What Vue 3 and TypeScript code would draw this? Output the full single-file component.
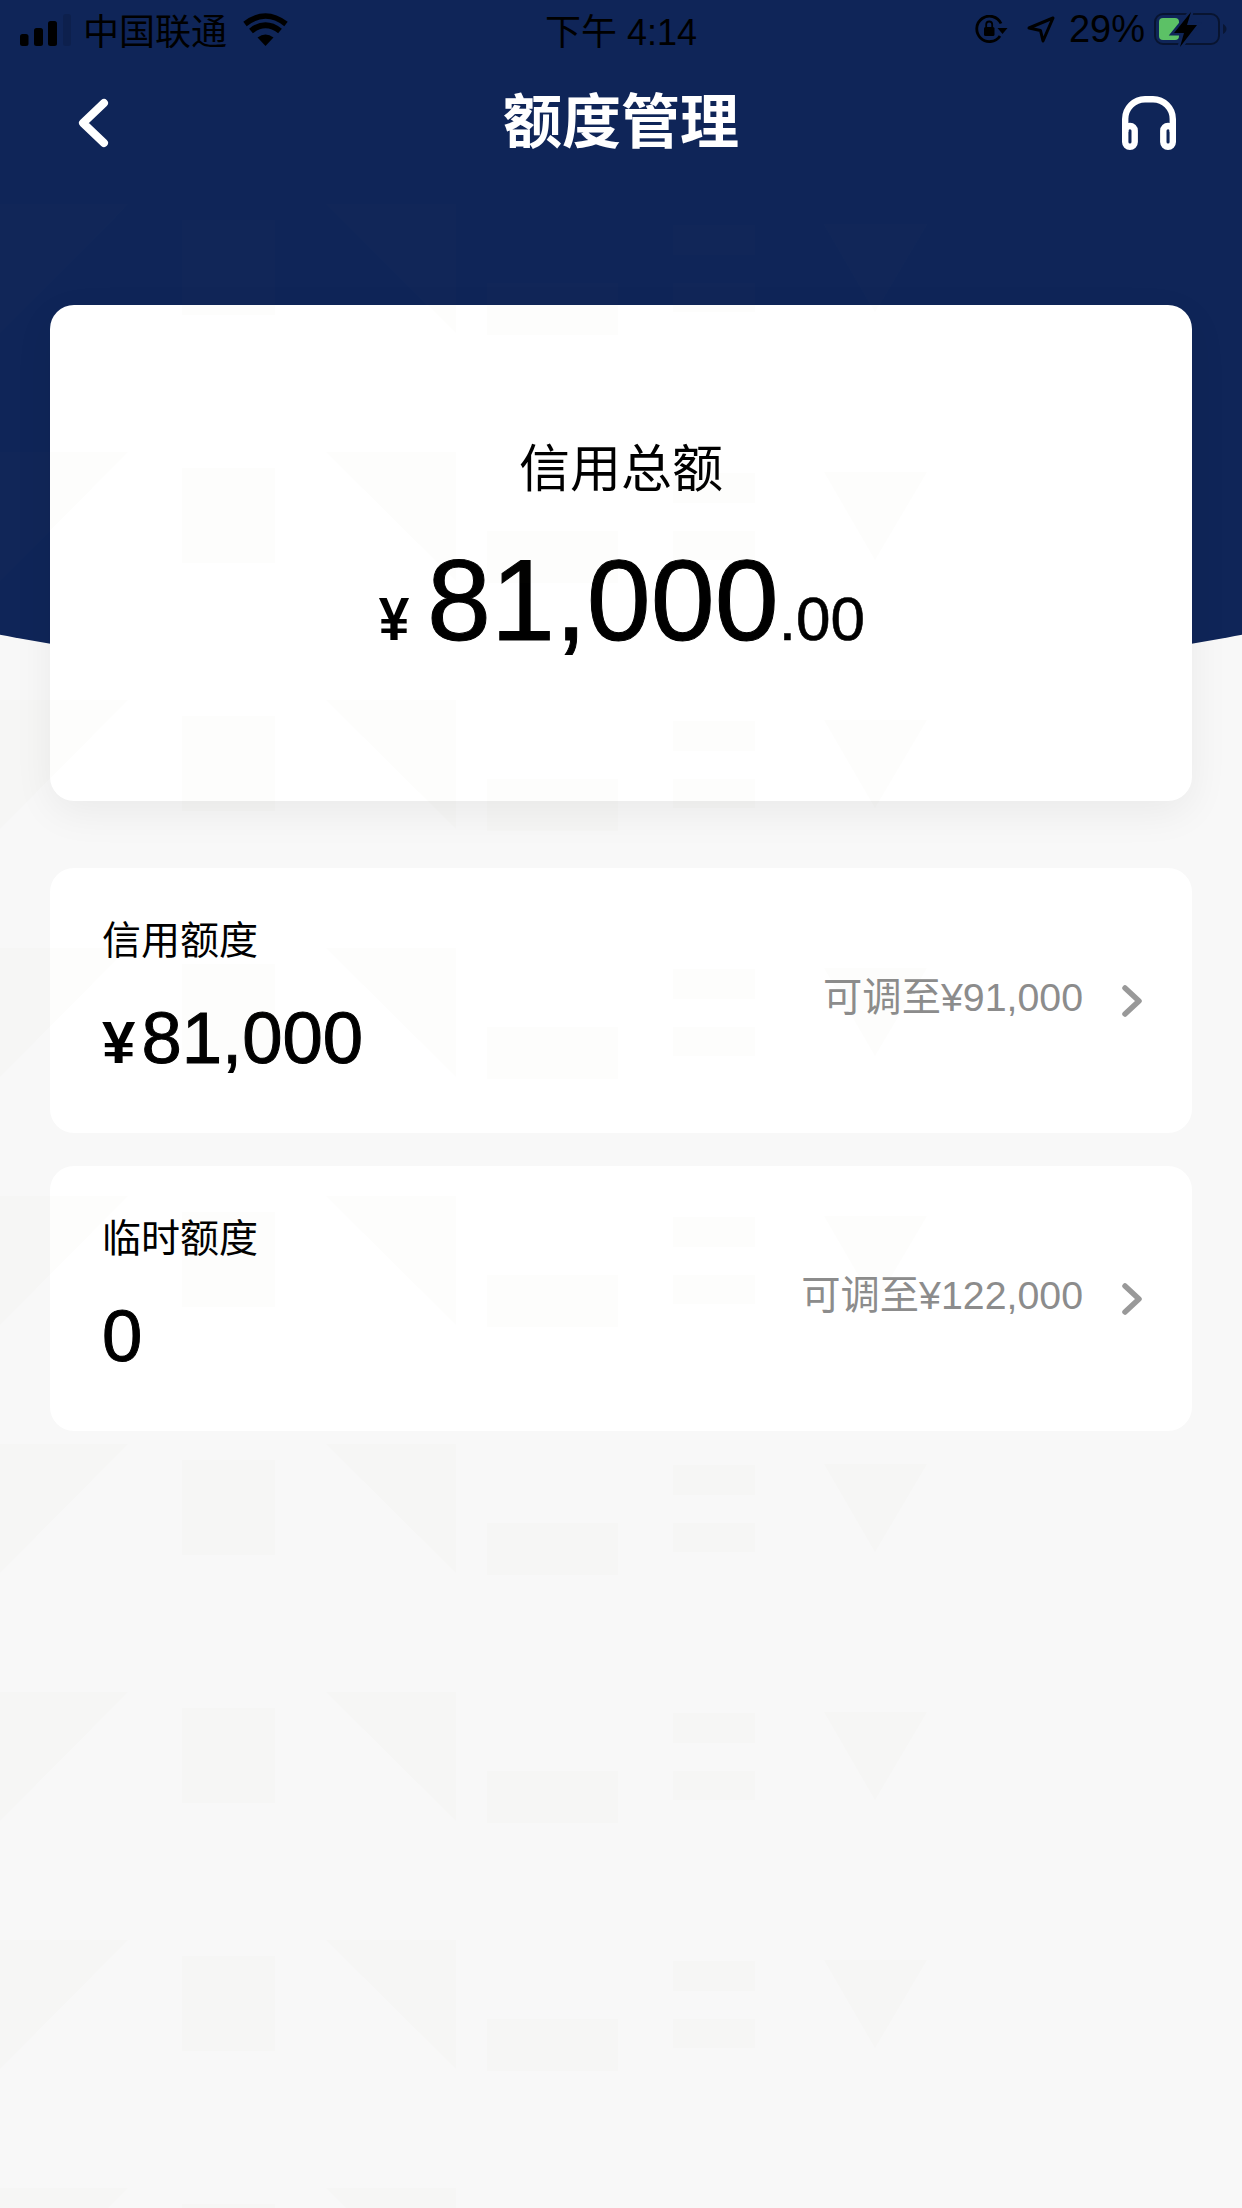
<script setup lang="ts">
interface QuotaRow {
  id: number;
  label: string;
  amount: string;
  hasCurrency: boolean;
  limit: string;
}

const rows: QuotaRow[] = [
  { id: 1, label: '信用额度', amount: '81,000', hasCurrency: true, limit: '可调至¥91,000' },
  { id: 2, label: '临时额度', amount: '0', hasCurrency: false, limit: '可调至¥122,000' },
];
</script>

<template>
  <div class="page">
    <div class="hero">
      <div class="status">
        <div class="status-left">
          <svg class="signal" width="51" height="32" viewBox="0 0 51 32">
            <rect x="0" y="20" width="8.5" height="12" rx="2.5" />
            <rect x="14" y="14" width="9" height="18" rx="2.5" />
            <rect x="28" y="7" width="9" height="25" rx="2.5" />
            <rect x="43" y="0" width="8" height="32" rx="2.5" opacity="0.12" />
          </svg>
          <span class="carrier">中国联通</span>
          <svg width="45" height="33" viewBox="0 0 45 33">
            <path d="M22.500 33 L14.500 24.500 Q22.500 18.500 30.500 24.500 Z" />
            <path d="M8 18 Q22.500 6.500 37 18" fill="none" stroke="#000" stroke-width="6" />
            <path d="M2 11 Q22.500 -5 43 11" fill="none" stroke="#000" stroke-width="5.500" />
          </svg>
        </div>
        <span class="time">下午 4:14</span>
        <div class="status-right">
          <svg width="33" height="28" viewBox="0 0 33 28">
            <path d="M25 21 A12.700 12.700 0 1 1 26 8.500" fill="none" stroke="#000" stroke-width="2.800" />
            <path d="M22.500 13 L32.500 13 L27.500 19 Z" />
            <rect x="9" y="12" width="10.500" height="9" rx="1.500" />
            <path d="M11.200 12 V9.500 A3 3 0 0 1 17.200 9.500 V12" fill="none" stroke="#000" stroke-width="1.800" />
          </svg>
          <svg class="arrow" width="28" height="27" viewBox="0 0 28 27">
            <path d="M2 12 L26 2 L16 25 L13.500 14.500 Z" fill="none" stroke="#000" stroke-width="3" stroke-linejoin="round" />
          </svg>
          <span class="battery-text">29%</span>
          <svg class="battery" width="73" height="35" viewBox="0 0 73 35">
            <rect x="1" y="2" width="64" height="30" rx="8" fill="none" stroke="#000" stroke-opacity="0.45" stroke-width="2" />
            <path d="M69 12 Q72.500 14 72.500 17 Q72.500 20 69 22 Z" fill="#000" opacity="0.4" />
            <rect x="5" y="6" width="20" height="22" rx="4" fill="#5cc166" />
            <path d="M37 0 L20 21 H30 L26 35 L43 13 H33 Z" stroke="#0f2558" stroke-width="5" paint-order="stroke" />
          </svg>
        </div>
      </div>

      <div class="nav">
        <svg class="back" width="36" height="56" viewBox="0 0 36 56">
          <polyline points="29,8 8,28 29,48" fill="none" stroke="#fff" stroke-width="8" stroke-linecap="round" stroke-linejoin="round" />
        </svg>
        <h1 class="title">额度管理</h1>
        <svg class="headset" width="54" height="54" viewBox="0 0 54 54">
          <path d="M3.200 36 V23 A20 20 0 0 1 23 3.200 H31 A20 20 0 0 1 50.800 23 V36" fill="none" stroke="#fff" stroke-width="6.400" />
          <rect x="3.200" y="30" width="9.500" height="20.800" rx="4.700" fill="none" stroke="#fff" stroke-width="6.400" />
          <rect x="41.300" y="30" width="9.500" height="20.800" rx="4.700" fill="none" stroke="#fff" stroke-width="6.400" />
        </svg>
      </div>
    </div>

    <main class="content">
      <section class="summary">
        <p class="summary-label">信用总额</p>
        <p class="summary-amount">
          <span class="summary-yen">¥</span>
          <span class="summary-int">81,000</span>
          <span class="summary-dec">.00</span>
        </p>
      </section>

      <div class="rows">
        <section v-for="row in rows" :key="row.id" class="row">
          <div class="row-left">
            <p class="row-label">{{ row.label }}</p>
            <p class="row-amount">
              <span v-if="row.hasCurrency" class="row-yen">¥</span>{{ row.amount }}
            </p>
          </div>
          <span class="row-limit">{{ row.limit }}</span>
          <svg class="chevron" width="20" height="32" viewBox="0 0 20 32">
            <polyline points="3,3 17,16 3,29" fill="none" stroke="#999" stroke-width="5.500" stroke-linecap="round" stroke-linejoin="round" />
          </svg>
        </section>
      </div>
    </main>

    <!-- watermark lies over everything, cards included -->
    <svg class="watermark" width="1242" height="2004" viewBox="0 0 1242 2004">
      <defs>
        <pattern id="mark" x="0" y="0" width="1242" height="248" patternUnits="userSpaceOnUse">
          <path d="M0 0 H128 L0 129 Z" />
          <rect x="182" y="16" width="93" height="95" />
          <path d="M326 0 H456 V129 Z" />
          <rect x="487" y="79" width="131" height="52" />
          <rect x="673" y="21" width="82" height="30" />
          <rect x="673" y="79" width="82" height="29" />
          <path d="M824 20 H927 L875 108 Z" />
        </pattern>
      </defs>
      <rect width="1242" height="2004" fill="url(#mark)" />
    </svg>
  </div>
</template>

<style>
html,
body {
  margin: 0;
  background: #f8f8f8;
}
</style>

<style scoped>
.page {
  position: relative;
  width: 1242px;
  height: 2208px;
  overflow: hidden;
  background: #f8f8f8;
  font-family: "Liberation Sans", "Noto Sans CJK SC", sans-serif;
  color: #000;
}

p,
h1 {
  margin: 0;
}

.hero {
  height: 690px;
  background: #0f2558;
  clip-path: ellipse(1585px 690px at 50% 0);
}

.status {
  display: grid;
  grid-template-columns: 1fr auto 1fr;
  align-items: center;
  height: 58px;
  font-size: 36px;
}

.status-left {
  display: flex;
  align-items: center;
  padding-left: 20px;
}

.signal {
  margin-top: 2px;
}

.carrier {
  margin: 0 16px 0 12px;
}

.time {
  font-size: 36px;
}

.status-right {
  display: flex;
  align-items: center;
  justify-content: flex-end;
  padding-right: 15px;
}

.arrow {
  margin-left: 19px;
}

.battery-text {
  margin: 0 9px 0 14px;
  font-size: 38px;
}

.nav {
  display: grid;
  grid-template-columns: 1fr auto 1fr;
  align-items: center;
  height: 60px;
  margin-top: 35px;
  padding: 0 66px;
}

.back {
  margin-left: 9px;
}

.title {
  font-size: 59px;
  line-height: 60px;
  font-weight: 700;
  color: #fff;
}

.headset {
  justify-self: end;
}

.content {
  position: relative;
  display: flex;
  flex-direction: column;
  gap: 67px;
  margin-top: -385px;
  padding: 0 50px;
}

.summary {
  display: flex;
  flex-direction: column;
  align-items: center;
  height: 496px;
  padding-top: 135px;
  box-sizing: border-box;
  background: #fff;
  border-radius: 24px;
  box-shadow: 0 12px 40px rgba(0, 0, 0, 0.06);
}

.summary-label {
  font-size: 51px;
  line-height: 60px;
}

.summary-amount {
  display: flex;
  align-items: baseline;
  margin-top: 35px;
  line-height: 130px;
}

.summary-yen {
  font-size: 61px;
  font-weight: 700;
  transform: scaleX(0.9);
}

.summary-int {
  margin-left: 16px;
  font-size: 115px;
  -webkit-text-stroke: 1px #000;
}

.summary-dec {
  font-size: 62px;
  -webkit-text-stroke: 0.6px #000;
}

.rows {
  display: flex;
  flex-direction: column;
  gap: 33px;
}

.row {
  display: flex;
  align-items: center;
  height: 265px;
  padding: 0 50px 0 52px;
  box-sizing: border-box;
  background: #fff;
  border-radius: 24px;
}

.row-left {
  flex: 1;
  margin-top: -3px;
}

.row-label {
  font-size: 39px;
  line-height: 46px;
}

.row-amount {
  margin-top: 32px;
  font-size: 72.500px;
  line-height: 84px;
  -webkit-text-stroke: 1px #000;
}

.row-yen {
  margin-right: 6px;
  font-size: 60px;
  font-weight: 700;
  line-height: 1;
  -webkit-text-stroke: 0;
}

.row-limit {
  margin-bottom: 14px;
  font-size: 39.300px;
  color: #8c8c8c;
}

.chevron {
  margin-left: 39px;
}

.watermark {
  position: absolute;
  left: 0;
  top: 204px;
  fill: rgba(120, 100, 80, 0.016);
  pointer-events: none;
}
</style>
